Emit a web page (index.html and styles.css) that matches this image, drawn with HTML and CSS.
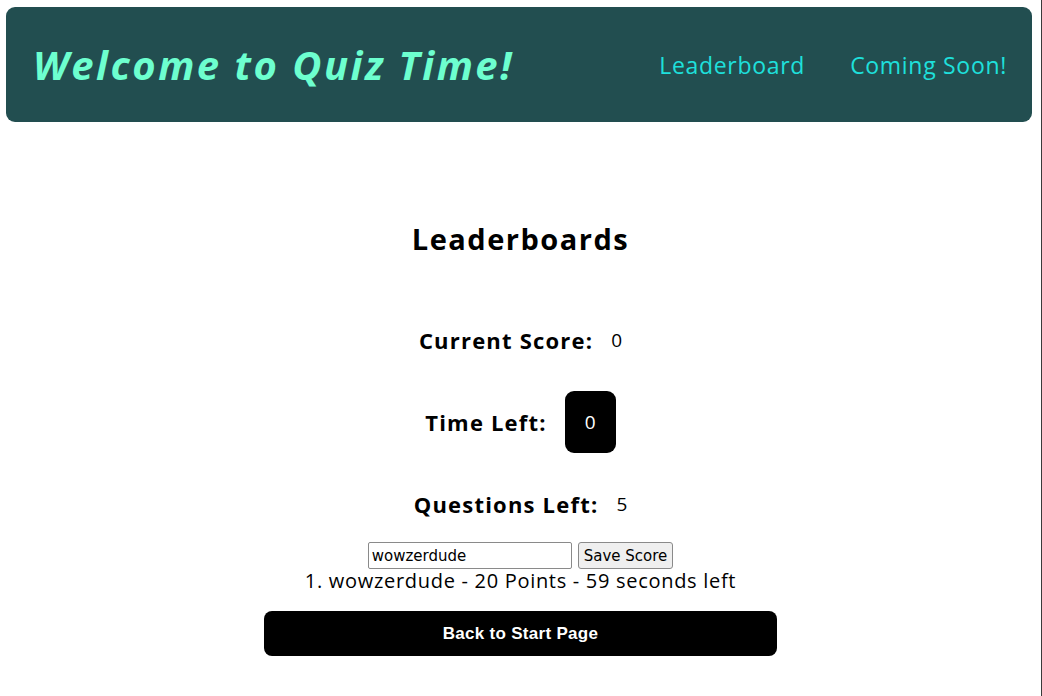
FILE: index.html
```html
<!DOCTYPE html>
<html lang="en">
<head>
<meta charset="utf-8">
<title>Quiz Time - Leaderboard</title>
<link rel="stylesheet" href="styles.css">
</head>
<body>
<header class="topbar">
  <h1 class="brand">Welcome to Quiz Time!</h1>
  <nav class="nav">
    <a class="nav-link" href="#">Leaderboard</a>
    <a class="nav-link" href="#">Coming Soon!</a>
  </nav>
</header>
<main class="board">
  <h2 class="board-title">Leaderboards</h2>
  <div class="stat stat-score"><span class="stat-label">Current Score:</span><span class="stat-value">0</span></div>
  <div class="stat stat-time"><span class="stat-label">Time Left:</span><span class="timer">0</span></div>
  <div class="stat stat-questions"><span class="stat-label">Questions Left:</span><span class="stat-value">5</span></div>
  <form class="save-form">
    <input class="name-input" type="text" value="wowzerdude">
    <button class="save-btn" type="button">Save Score</button>
  </form>
  <ol class="scores">
    <li>1. wowzerdude - 20 Points - 59 seconds left</li>
  </ol>
  <button class="back-btn" type="button">Back to Start Page</button>
</main>
</body>
</html>
```
FILE: styles.css
```css
html {
  min-height: 100%;
  box-sizing: border-box;
  border-right: 1px solid #3a3a3a;
  background: #fff;
}
body {
  margin: 0;
  font-family: "Open Sans", "Noto Sans", sans-serif;
  color: #000;
}
.topbar {
  margin: 7px 9px 0 6px;
  height: 115px;
  background: #224e50;
  border-radius: 9px;
  display: flex;
  align-items: center;
  justify-content: space-between;
  padding: 0 25px 0 27px;
}
.brand {
  margin: 0;
  font-size: 40px;
  font-weight: 700;
  font-style: italic;
  color: #6dffcf;
  letter-spacing: 2.5px;
}
.nav {
  display: flex;
  gap: 45px;
}
.nav-link {
  color: #1ee0dc;
  text-decoration: none;
  font-size: 23px;
  letter-spacing: 0.7px;
}
.board {
  display: flex;
  flex-direction: column;
  align-items: center;
}
.board-title {
  margin: 99px 0 0;
  font-size: 29px;
  font-weight: 700;
  line-height: 36px;
  letter-spacing: 1.5px;
}
.stat {
  display: flex;
  align-items: center;
  gap: 18px;
}
.stat-score { margin-top: 68px; }
.stat-time { margin-top: 36px; }
.stat-questions { margin-top: 36px; }
.stat-label {
  font-size: 22px;
  font-weight: 700;
  letter-spacing: 1.2px;
}
.stat-value {
  font-size: 19px;
}
.timer {
  width: 51px;
  height: 62px;
  background: #000;
  color: #fff;
  border-radius: 9px;
  display: flex;
  align-items: center;
  justify-content: center;
  font-size: 19px;
}
.save-form {
  margin-top: 23px;
  display: flex;
  gap: 6px;
}
.name-input {
  width: 204px;
  height: 27px;
  box-sizing: border-box;
  font-family: "DejaVu Sans", sans-serif;
  font-size: 15px;
  padding: 1px 3px;
  border: 1px solid #8a8a8a;
  border-radius: 2px;
}
.save-btn {
  height: 27px;
  box-sizing: border-box;
  font-family: "DejaVu Sans", sans-serif;
  font-size: 15px;
  padding: 0 5px;
  background: #efefef;
  border: 1px solid #8a8a8a;
  border-radius: 3px;
}
.scores {
  margin: 0;
  padding: 0;
  list-style: none;
  font-size: 20px;
  line-height: 24px;
  letter-spacing: 0.7px;
}
.back-btn {
  margin-top: 18px;
  width: 513px;
  height: 45px;
  background: #000;
  color: #fff;
  border: none;
  border-radius: 8px;
  font-family: "Liberation Sans", Arial, sans-serif;
  font-weight: 700;
  font-size: 17px;
  letter-spacing: 0.3px;
}
```
